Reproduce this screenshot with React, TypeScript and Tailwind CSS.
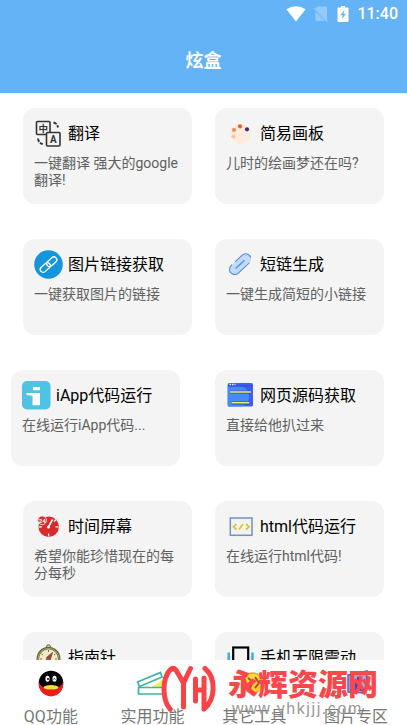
import type { ReactNode } from "react";

type Tool = {
  title: string;
  desc: string;
  icon: ReactNode;
  className?: string;
};

const iconBox = "w-[29px] h-[29px] shrink-0";

const tools: Tool[] = [
  {
    title: "翻译",
    desc: "一键翻译 强大的google翻译!",
    icon: (
      <svg aria-hidden="true" className={iconBox} viewBox="0 0 29 29" fill="none" stroke="#333" strokeWidth="1.6">
        <path d="M12 15.5H3.5a1 1 0 0 1-1-1V3.500a1 1 0 0 1 1-1H15a1 1 0 0 1 1 1V13" />
        <rect x="12.500" y="13.500" width="13.500" height="13.500" rx="1" />
        <path d="M19.500 3.500c2.500.5 4 2.200 4.500 5M4 19.500c.3 3 2 5 4.800 5.700" strokeDasharray="3.600 1.200" strokeWidth="1.900" />
        <text x="9.200" y="12.500" fontSize="9.500" fontWeight="700" fill="#333" stroke="none" textAnchor="middle" fontFamily="Noto Sans CJK SC, sans-serif">中</text>
        <text x="19.300" y="24" fontSize="10" fontWeight="700" fill="#333" stroke="none" textAnchor="middle" fontFamily="Roboto, sans-serif">A</text>
      </svg>
    ),
  },
  {
    title: "简易画板",
    desc: "儿时的绘画梦还在吗?",
    icon: (
      <svg aria-hidden="true" className={iconBox} viewBox="0 0 29 29">
        <path d="M14.700 4.500a10.300 10.300 0 1 1-9.300 15.500c2.500.4 4.300-.5 3.500-2.500-.8-1.800-4-2.300-4-3.500C4.400 8.500 9 4.500 14.700 4.500z" fill="#ffebdb" />
        <circle cx="8" cy="11" r="2.100" fill="#ee8c59" />
        <circle cx="14" cy="7.300" r="2.100" fill="#e0603d" />
        <circle cx="21" cy="10.300" r="2.100" fill="#40306f" />
        <circle cx="7.300" cy="17.600" r="2" fill="#fac29c" />
      </svg>
    ),
  },
  {
    title: "图片链接获取",
    desc: "一键获取图片的链接",
    icon: (
      <svg aria-hidden="true" className={iconBox} viewBox="0 0 29 29" fill="none" stroke="#fff" strokeWidth="1.300">
        <circle cx="14.500" cy="14.500" r="14.300" fill="#1595dc" stroke="none" />
        <g transform="rotate(-42 14.500 14.500)">
          <rect x="4.300" y="11.700" width="11.500" height="5.800" rx="2.900" />
          <rect x="13" y="11.700" width="11.500" height="5.800" rx="2.900" />
        </g>
      </svg>
    ),
  },
  {
    title: "短链生成",
    desc: "一键生成简短的小链接",
    icon: (
      <svg aria-hidden="true" className={iconBox} viewBox="0 0 29 29" fill="none">
        <g transform="rotate(-43 14.200 14.200)">
          <rect x="1.500" y="9" width="25.500" height="10.500" rx="5.200" fill="#c3dafc" />
          <path d="M8 9h-1.300a5.200 5.200 0 0 0 0 10.500H22M12 9h9.800a5.200 5.200 0 0 1 4.700 7.500" stroke="#4388dd" strokeWidth="1" />
          <path d="M8 14.200h12" stroke="#4b94ee" strokeWidth="1.500" />
        </g>
      </svg>
    ),
  },
  {
    title: "iApp代码运行",
    desc: "在线运行iApp代码...",
    className: "-ml-3 mr-3",
    icon: (
      <svg aria-hidden="true" className={iconBox} viewBox="0 0 29 29">
        <rect width="28.500" height="28.500" rx="5" fill="#50c2e3" />
        <path d="M11 6h7v3.300h-7zM4.500 12H18v12.300h-7.500v-9.500l-6-.8z" fill="#fff" />
      </svg>
    ),
  },
  {
    title: "网页源码获取",
    desc: "直接给他扒过来",
    icon: (
      <svg aria-hidden="true" className={iconBox} viewBox="0 0 29 29">
        <rect x="1.700" y="2" width="25.300" height="23.500" rx="1.500" fill="#405cfa" />
        <path d="M1.700 5.500h14a10.500 10.500 0 0 1 0 20H3.200a1.500 1.500 0 0 1-1.500-1.500z" fill="#438bff" />
        <path d="M1.700 5h25.300" stroke="#3144c8" strokeWidth=".8" />
        <path d="M3.500 3.500h1.500M6 3.500h1.500M8.500 3.500h1" stroke="#e5e8d0" strokeWidth="1.300" />
        <path d="M4 11.200h21M5.700 22h17.500" stroke="#3649a5" strokeWidth="2.800" />
        <path d="M4 11h21M5.700 21.800h17.500" stroke="#e8f06b" strokeWidth="1.600" />
      </svg>
    ),
  },
  {
    title: "时间屏幕",
    desc: "希望你能珍惜现在的每分每秒",
    icon: (
      <svg aria-hidden="true" className={iconBox} viewBox="0 0 29 29">
        <circle cx="14.700" cy="14.800" r="10.200" fill="#d92a2e" />
        <path d="M14.700 21.500v3M21.500 14.800h3M5 14.800h3M20 9.500l2-2" stroke="#fff" strokeWidth="1.200" />
        <path d="M14.500 15l4-7.500" stroke="#fff" strokeWidth="1.600" />
        <circle cx="14.500" cy="15" r="1.600" fill="#fff" />
        <circle cx="8.200" cy="8.300" r="4.300" fill="#d92a2e" stroke="#f8d8d8" strokeWidth="1" />
        <text x="8.200" y="10.600" fontSize="6" fontWeight="700" fill="#fff" textAnchor="middle" fontFamily="Roboto, sans-serif">24</text>
      </svg>
    ),
  },
  {
    title: "html代码运行",
    desc: "在线运行html代码!",
    icon: (
      <svg aria-hidden="true" className={iconBox} viewBox="0 0 29 29" fill="none">
        <rect x="4.300" y="6" width="21.700" height="17.300" fill="#f0f3f2" stroke="#7390c2" strokeWidth="1.500" />
        <path d="M10.500 12L7.500 14.800l3 2.800M20 12l3 2.800-3 2.800M17 12l-4 5.600" stroke="#d8c51f" strokeWidth="1.700" />
      </svg>
    ),
  },
  {
    title: "指南针",
    desc: "手机指南针",
    icon: (
      <svg aria-hidden="true" className={iconBox} viewBox="0 0 29 29" fill="none">
        <circle cx="14.500" cy="3.800" r="2" fill="#e8dca8" stroke="#59643a" />
        <circle cx="14.500" cy="15.800" r="10.700" fill="#f5e8c6" stroke="#5b663d" strokeWidth="2.500" />
        <circle cx="14.500" cy="15.800" r="10.500" stroke="#a2a86b" strokeWidth="1" />
        <path d="M14.500 7v2M7.500 11l1.500 1M21.500 11l-1.500 1M6 16h2M21 16h2" stroke="#77734f" />
        <path d="M18.500 9.500l-2.500 8-3.500-3z" fill="#a5443a" stroke="#63463b" strokeWidth=".8" />
        <path d="M12.500 14.500l3.500 3-6 5z" fill="#786b58" />
      </svg>
    ),
  },
  {
    title: "手机无限震动",
    desc: "让手机一直震动",
    icon: (
      <svg aria-hidden="true" className={iconBox} viewBox="0 0 29 29" fill="none">
        <rect x="7.200" y="4.500" width="15" height="22" fill="#f4f4f4" stroke="#000" strokeWidth="2.200" />
        <path d="M2.700 9.500v13M26.500 9.500v13" stroke="#45a7dc" strokeWidth="2.400" />
        <path d="M5 13v8M24.300 13v8" stroke="#bfe1f3" strokeWidth=".8" />
      </svg>
    ),
  },
];

const tabs = [
  {
    label: "QQ功能",
    icon: (
      <svg aria-hidden="true" className="size-7" viewBox="0 0 28 28">
        <circle cx="14" cy="14" r="12.300" fill="#000" />
        <path d="M2 13c3 8.500 21 8.500 24 0A12.200 12.200 0 1 1 2 13z" fill="#ef1c1c" />
        <path d="M3 15c4 7 18 7 22 0l-1-3H4z" fill="#000" />
        <ellipse cx="10.500" cy="9.800" rx="2.100" ry="3" fill="#fff" />
        <ellipse cx="17.500" cy="9.800" rx="2.100" ry="3" fill="#fff" />
        <circle cx="11" cy="10" r="1" />
        <path d="M16.300 10.500q1-2 2 0" stroke="#000" fill="none" />
        <ellipse cx="14" cy="18.300" rx="7.500" ry="2.300" fill="#f3dc38" />
      </svg>
    ),
  },
  {
    label: "实用功能",
    icon: (
      <svg aria-hidden="true" className="size-7 overflow-visible" viewBox="0 0 28 28" fill="none">
        <path d="M13 18l12-8.500 3 10H12z" fill="#e9f35b" />
        <path d="M-1.500 13L21.500 3.500l1.500 4.500L.5 17.500z" fill="#fff" stroke="#3fb3a4" strokeWidth="1.700" />
        <path d="M-.5 18.500H25v6.500H-.5z" fill="#fff" stroke="#3fb3a4" strokeWidth="1.700" />
      </svg>
    ),
  },
  {
    label: "其它工具",
    icon: (
      <svg aria-hidden="true" className="size-7" viewBox="0 0 28 28" fill="none">
        <circle cx="12.500" cy="14" r="10" fill="#fbdc3a" stroke="#e2a52d" strokeWidth="1.500" />
        <circle cx="19" cy="15" r="7" fill="#f7c92d" />
        <path d="M8 9l5 4-3 6M15 8l4 6-4 5" stroke="#a8502f" strokeWidth="2" />
      </svg>
    ),
  },
  {
    label: "图片专区",
    icon: (
      <svg aria-hidden="true" className="size-7" viewBox="0 0 28 28" fill="none">
        <path d="M6 6l19-4-1 22-18-1z" fill="#a0a6ec" stroke="#5960cc" strokeWidth="1.500" />
        <path d="M8 22l8-15 7 15z" fill="#4148b8" />
      </svg>
    ),
  },
];

function StatusBar() {
  return (
    <div className="flex h-7 items-center justify-end pr-[9px] text-white">
      <svg aria-hidden="true" className="h-4 w-5" viewBox="0 0 20 16">
        <path d="M.4 3.200Q10-2.700 19.600 3.200L10 15.500z" fill="#fff" />
      </svg>
      <svg aria-hidden="true" className="ml-[7px] h-4 w-4" viewBox="0 0 16 16">
        <path d="M4 .500h8.500q1.500 0 1.500 1.500V15L3 3.500V2zM2.500 5.500L12 15H4q-1.500 0-1.500-1.500z" fill="#94cafa" />
        <path d="M1 1.800L14.500 15.500" stroke="#94cafa" strokeWidth="1.200" />
      </svg>
      <svg aria-hidden="true" className="ml-2 h-[18px] w-3" viewBox="0 0 12 18">
        <path d="M4 1h4v1.500h2.500q1 0 1 1v12.500q0 1-1 1h-9q-1 0-1-1V3.500q0-1 1-1H4z" fill="#fff" />
        <path d="M7.500 5L3.300 10.300h2.400L4.700 14.300 9 8.800H6.500z" fill="#64b3f4" />
      </svg>
      <span className="ml-2 text-base font-medium">11:40</span>
    </div>
  );
}

function ToolCard({ title, desc, icon, className = "" }: Tool) {
  return (
    <button className={`flex h-24 flex-col gap-[7px] rounded-xl bg-[#f4f4f4] p-[11px] text-left ${className}`}>
      <span className="flex items-center gap-[5px]">
        {icon}
        <span className="whitespace-nowrap text-base leading-5 text-black">{title}</span>
      </span>
      <span className="text-sm leading-[17px] text-[#606060]">{desc}</span>
    </button>
  );
}

function Watermark() {
  return (
    <div className="pointer-events-none absolute right-[29px] bottom-2 flex items-start gap-3">
      <svg aria-hidden="true" className="h-12 w-[55px]" viewBox="0 0 55 48" fill="none" stroke="#fb4347" strokeWidth="5" strokeLinecap="round" strokeLinejoin="round">
        <path d="M9 44C1 34 1 14 9 5q3-3 6 0l7.500 13L29.500 3.500M22.500 18v24" />
        <path d="M34.500 14v22M35 25h8M43 13v31M44 3.500c11 9 11 31-1 40.500" />
      </svg>
      <div className="flex flex-col pt-1">
        <span className="text-3xl leading-8 font-black text-[#f9484c]">永辉资源网</span>
        <span className="pl-1 font-['Liberation_Sans',sans-serif] text-base leading-4 tracking-widest text-[#999]">www.yhkjjj.com</span>
      </div>
    </div>
  );
}

export default function App() {
  return (
    <div className="relative flex h-screen flex-col overflow-hidden bg-white font-[Roboto,'Noto_Sans_CJK_SC',sans-serif]">
      {/* Header */}
      <header className="shrink-0 bg-[#64b3f6]">
        <StatusBar />
        <h1 className="flex h-[65px] items-center justify-center text-lg font-bold text-white">炫盒</h1>
      </header>

      {/* Tool cards */}
      <main className="min-h-0 flex-1 overflow-hidden px-[23px] pt-[15px]">
        <div className="grid grid-cols-2 gap-x-[23px] gap-y-[35px]">
          {tools.map((tool) => (
            <ToolCard key={tool.title} {...tool} />
          ))}
        </div>
      </main>

      {/* Bottom tabs */}
      <nav className="grid h-[65px] shrink-0 grid-cols-4 bg-white pt-[9px]">
        {tabs.map((tab) => (
          <button key={tab.label} className="flex flex-col items-center gap-[10px]">
            {tab.icon}
            <span className="text-base leading-5 text-[#777]">{tab.label}</span>
          </button>
        ))}
      </nav>

      <Watermark />
    </div>
  );
}
